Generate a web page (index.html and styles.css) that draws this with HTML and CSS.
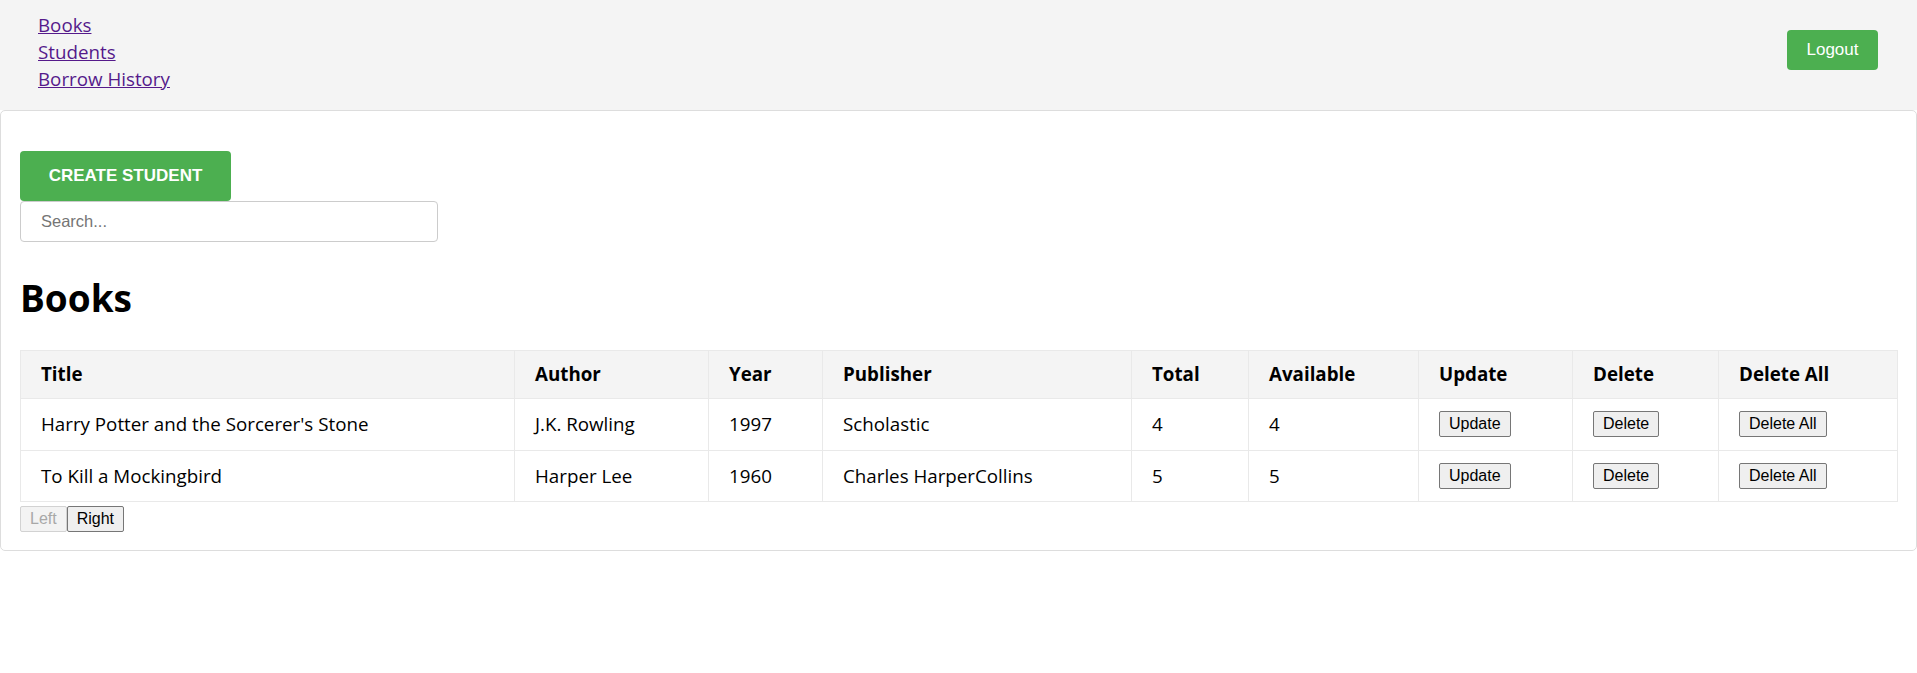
FILE: index.html
```html
<!DOCTYPE html>
<html lang="en">
<head>
<meta charset="utf-8">
<title>Library</title>
<link rel="stylesheet" href="styles.css">
</head>
<body>
<header class="topbar">
  <nav class="nav">
    <a href="#books" class="nav-link">Books</a>
    <a href="#students" class="nav-link">Students</a>
    <a href="#history" class="nav-link">Borrow History</a>
  </nav>
  <button class="logout">Logout</button>
</header>
<main class="card">
  <div class="toolbar">
    <button class="create">CREATE STUDENT</button>
    <input class="search" type="text" placeholder="Search...">
  </div>
  <h1 class="title">Books</h1>
  <table class="grid">
    <colgroup>
      <col class="c-title"><col class="c-author"><col class="c-year"><col class="c-pub"><col class="c-total"><col class="c-avail"><col class="c-upd"><col class="c-del"><col class="c-delall">
    </colgroup>
    <thead>
      <tr><th>Title</th><th>Author</th><th>Year</th><th>Publisher</th><th>Total</th><th>Available</th><th>Update</th><th>Delete</th><th>Delete All</th></tr>
    </thead>
    <tbody>
      <tr><td>Harry Potter and the Sorcerer's Stone</td><td>J.K. Rowling</td><td>1997</td><td>Scholastic</td><td>4</td><td>4</td><td><button class="btn">Update</button></td><td><button class="btn">Delete</button></td><td><button class="btn">Delete All</button></td></tr>
      <tr><td>To Kill a Mockingbird</td><td>Harper Lee</td><td>1960</td><td>Charles HarperCollins</td><td>5</td><td>5</td><td><button class="btn">Update</button></td><td><button class="btn">Delete</button></td><td><button class="btn">Delete All</button></td></tr>
    </tbody>
  </table>
  <div class="pager">
    <button class="btn" disabled>Left</button><button class="btn">Right</button>
  </div>
</main>
</body>
</html>
```
FILE: styles.css
```css
* { box-sizing: border-box; }
html, body { margin: 0; padding: 0; background: #fff; }
body {
  font-family: "Open Sans", "Noto Sans", sans-serif;
  font-size: 18.75px;
  line-height: 26.6px;
  color: #000;
}
.topbar {
  display: flex;
  justify-content: space-between;
  align-items: center;
  background: #f4f4f4;
  padding: 11px 39px 18px 38px;
  height: 110px;
}
.nav { display: flex; flex-direction: column; }
.nav-link { color: #551a8b; text-decoration: underline; line-height: 27px; }
.logout {
  font-family: "Liberation Sans", Arial, sans-serif;
  font-size: 17px;
  color: #fff;
  background: #4caf50;
  border: none;
  border-radius: 4px;
  height: 40px;
  width: 91px;
  padding: 0;
  margin-bottom: 3px;
}
.card {
  border: 1px solid #ddd;
  border-radius: 5px;
  padding: 40px 19px 18px 19px;
}
.toolbar { display: flex; flex-direction: column; align-items: flex-start; }
.create {
  font-family: "Liberation Sans", Arial, sans-serif;
  font-weight: bold;
  font-size: 17px;
  color: #fff;
  background: #4caf50;
  border: none;
  border-radius: 4px;
  height: 50px;
  width: 211px;
  padding: 0;
}
.search {
  font-family: "Liberation Sans", Arial, sans-serif;
  font-size: 16.5px;
  width: 418px;
  height: 41px;
  border: 1px solid #ccc;
  border-radius: 4px;
  padding: 0 20px;
  color: #000;
}
.search::placeholder { color: #757575; }
.title {
  font-size: 37px;
  font-weight: bold;
  line-height: 53px;
  margin: 27px 0 28px 0;
  padding-top: 2px;
  height: 53px;
}
.grid {
  width: 100%;
  border-collapse: collapse;
  table-layout: fixed;
}
.c-title { width: 494px; }
.c-author { width: 194px; }
.c-year { width: 114px; }
.c-pub { width: 309px; }
.c-total { width: 117px; }
.c-avail { width: 170px; }
.c-upd { width: 154px; }
.c-del { width: 146px; }
.c-delall { width: 179px; }
.grid th, .grid td {
  border: 1px solid #e9e9e9;
  text-align: left;
  vertical-align: middle;
  padding: 12px 20px;
  white-space: nowrap;
}
.grid th {
  background: #f4f4f4;
  font-weight: bold;
  padding: 10px 20px;
  height: 48px;
}
.grid td { height: 49.5px; }
.btn {
  font-family: "Liberation Sans", Arial, sans-serif;
  font-size: 16px;
  line-height: 18px;
  height: 26px;
  padding: 3px 9px;
  background: #efefef;
  color: #000;
  border: 1px solid #767676;
  border-radius: 2px;
  vertical-align: top;
}
.btn:disabled {
  color: #a8a8a8;
  background: #f3f3f3;
  border-color: #d2d2d2;
}
.pager { display: flex; margin-top: 4px; }
```
